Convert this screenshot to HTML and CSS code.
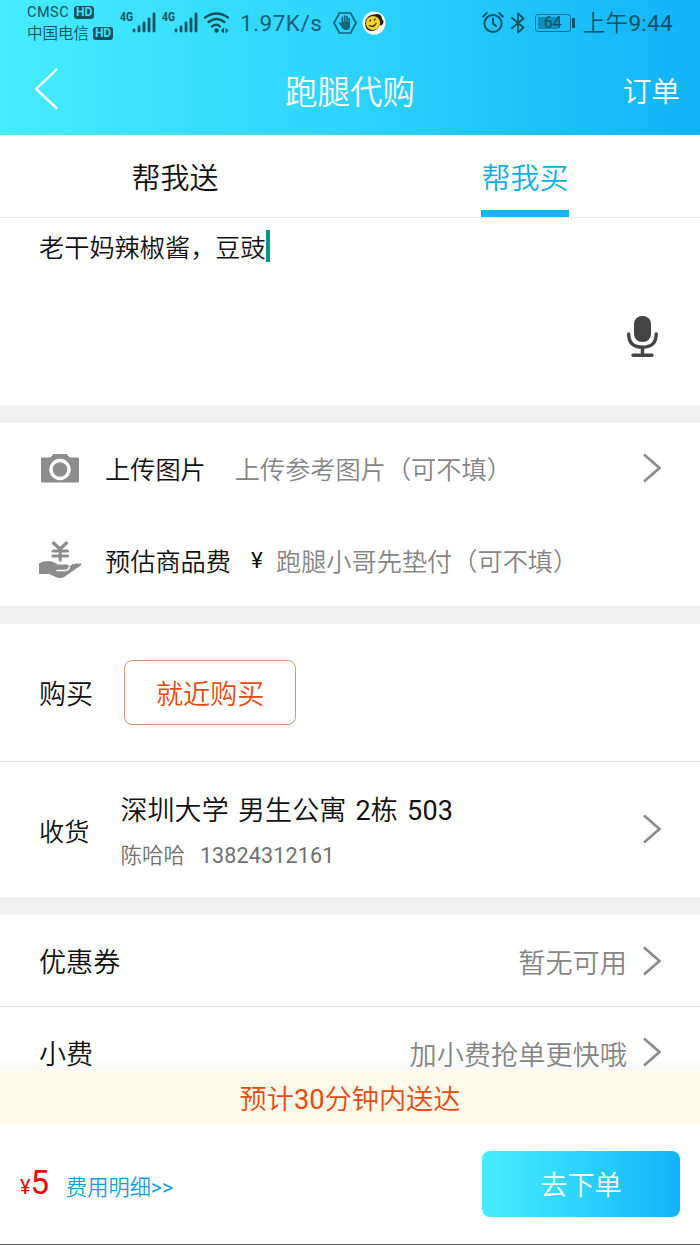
FILE: index.html
```html
<!DOCTYPE html>
<html lang="zh-CN">
<head>
<meta charset="utf-8">
<meta name="viewport" content="width=device-width, initial-scale=1">
<title>跑腿代购</title>
<link rel="stylesheet" href="styles.css">
</head>
<body>
<div class="app">
  <header class="header">
    <div class="status">
      <div class="carriers">
        <div class="carrier"><span class="num">CMSC</span><b class="hd">HD</b></div>
        <div class="carrier carrier-cn"><span>中国电信</span><b class="hd">HD</b></div>
      </div>
      <svg class="signals" width="110" height="26" viewBox="0 0 110 26">
        <g fill="none" stroke="#12525f" stroke-width="2.800" stroke-linecap="round">
          <path d="M14 22v-1M19 22v-4M24 22v-8M29 22V10M34 22V5"/>
          <path d="M56 22v-1M61 22v-4M66 22v-8M71 22V10M76 22V5"/>
        </g>
        <g class="net"><text x="0" y="12" textLength="13" lengthAdjust="spacingAndGlyphs">4G</text><text x="42" y="12" textLength="13" lengthAdjust="spacingAndGlyphs">4G</text></g>
        <g fill="none" stroke="#12525f" stroke-width="2.300" stroke-linecap="round">
          <path d="M85 8.500q11.500-8 23 0M88.500 13q8-6 16 0M92 17.500q4.500-3.500 8 0"/>
        </g>
        <circle cx="96.500" cy="21.500" r="2.200" fill="#12525f"/>
        <path d="M104 18.500v6l-3-3zM105.500 18.500v6l3-3z" fill="#12525f"/>
      </svg>
      <span class="speed num">1.97K/s</span>
      <svg class="palm" width="24" height="24" viewBox="0 0 24 24">
        <path d="M6.500 2h11L23 12l-5.500 10h-11L1 12z" fill="none" stroke="#12637b" stroke-width="1.700" stroke-linejoin="round"/>
        <path d="M9.300 12V6.500M11.700 11V5M14 11V5.700M16.200 12V7.700M9 15l-2.300-3" stroke="#12637b" stroke-width="1.700" stroke-linecap="round"/>
        <path d="M8.400 11H17v4q0 4-3.500 4h-1.500q-2 0-3.600-3z" fill="#12637b"/>
      </svg>
      <svg class="face" width="24" height="24" viewBox="0 0 24 24">
        <circle cx="12" cy="12" r="11.500" fill="#fff"/>
        <path d="M3 12Q4 4 13 3.200q3-.7 5 .6Q20 5 20 8q3 3 0 6-1 1-2 0-3 6-9 6-6-1-6-8z" fill="#202014"/>
        <ellipse cx="11" cy="12" rx="7.200" ry="6.800" transform="rotate(-25 11 12)" fill="#f8d51d"/>
        <path d="M8 10l.5-.8M12.500 8.800l.5-.8M7.500 14.500q4 2.500 6.500-2" fill="none" stroke="#2b2916" stroke-width="1.400" stroke-linecap="round"/>
      </svg>
      <div class="status-right">
        <svg width="22" height="24" viewBox="0 0 22 24" fill="none" stroke="#0b5168" stroke-width="2" stroke-linecap="round">
          <circle cx="11" cy="12.500" r="8.600"/><path d="M11 7.500v5l3 2.500M1.200 5.500L4.800 2M20.800 5.500L17.200 2"/>
        </svg>
        <svg class="bluetooth" width="14" height="24" viewBox="0 0 14 24" fill="none" stroke="#0b5168" stroke-width="1.800" stroke-linejoin="round" stroke-linecap="round">
          <path d="M1 7l11.500 9.500L7 21.500v-19l5.500 5L1 17"/>
        </svg>
        <span class="battery"><span class="level"></span><span class="percent num">64</span></span><i class="battery-tip"></i>
        <span class="clock">上午<span class="num">9:44</span></span>
      </div>
    </div>
    <div class="nav">
      <svg width="26" height="42" viewBox="0 0 26 42" fill="none" stroke="#fff" stroke-width="2.400" stroke-linecap="round" stroke-linejoin="round"><path d="M22.500 1.500L2 21l20.500 19"/></svg>
      <h1 class="title">跑腿代购</h1>
      <span class="orders">订单</span>
    </div>
  </header>

  <nav class="tabs">
    <div class="tab"><span>帮我送</span></div>
    <div class="tab tab-active"><span>帮我买</span></div>
  </nav>

  <section class="note">
    <div class="note-text"><span>老干妈辣椒酱，豆豉</span><i class="caret"></i></div>
    <svg class="mic" width="32" height="43" viewBox="0 0 32 43">
      <rect x="8" y="1" width="17" height="26" rx="8" fill="#444"/>
      <path d="M2.700 19q0 13.200 13.800 13.200T30.200 19M16.500 32v8M7 40.200h19" fill="none" stroke="#444" stroke-width="3.400" stroke-linecap="round"/>
    </svg>
  </section>

  <section class="group">
    <div class="row upload">
      <svg class="icon" width="44" height="40" viewBox="0 0 44 40">
        <path d="M3 9.500h9.500L15.500 6h13l3 3.500H40q1 0 1 1v23q0 1-1 1H4q-1 0-1-1v-24z" fill="#8c8c8c"/>
        <circle cx="22" cy="21.500" r="9" fill="#8c8c8c" stroke="#fff" stroke-width="3.400"/>
      </svg>
      <span class="label">上传图片</span>
      <span class="hint">上传参考图片（可不填）</span>
      <svg class="chevron" width="20" height="30" viewBox="0 0 20 30"><path d="M2 1.500L17.500 15 2 28.500"/></svg>
    </div>
    <div class="row estimate">
      <svg class="icon" width="44" height="40" viewBox="0 0 44 40">
        <path d="M15.500 3l6.500 6 6.500-6M15 11h14.500M15 16h14.500M22.200 10v10" fill="none" stroke="#8c8c8c" stroke-width="3.200" stroke-linecap="round"/>
        <path d="M1 23.500q6-3.500 13-2l6 3h8q3.500.3 3.500 2l2-1.500q1.500-2 2.500-.5l2-1q1.500-.6 2 .5l2-.8q2.500 0 1 2L27 36.500q-4 2.500-8 1L11 34H1z" fill="#8c8c8c"/>
        <path d="M19 30.500h8q4-.3 4.200-3.500" fill="none" stroke="#fff" stroke-width="1.600" stroke-linecap="round"/>
      </svg>
      <span class="label">预估商品费</span>
      <span class="yen">¥</span>
      <span class="hint">跑腿小哥先垫付（可不填）</span>
    </div>
  </section>

  <section class="group">
    <div class="row buy">
      <span class="label label-lg">购买</span>
      <span class="nearby">就近购买</span>
    </div>
    <div class="row receive">
      <span class="label">收货</span>
      <div class="address">
        <div class="place">深圳大学 男生公寓 <span class="num">2</span>栋 <span class="num">503</span></div>
        <div class="contact"><span>陈哈哈</span><span class="phone num">13824312161</span></div>
      </div>
      <svg class="chevron" width="20" height="30" viewBox="0 0 20 30"><path d="M2 1.500L17.500 15 2 28.500"/></svg>
    </div>
  </section>

  <section class="group last">
    <div class="row coupon">
      <span class="label label-lg">优惠券</span>
      <span class="value">暂无可用</span>
      <svg class="chevron" width="20" height="30" viewBox="0 0 20 30"><path d="M2 1.500L17.500 15 2 28.500"/></svg>
    </div>
    <div class="row tip">
      <span class="label label-lg">小费</span>
      <span class="value">加小费抢单更快哦</span>
      <svg class="chevron" width="20" height="30" viewBox="0 0 20 30"><path d="M2 1.500L17.500 15 2 28.500"/></svg>
    </div>
  </section>

  <div class="eta">预计<span class="num">30</span>分钟内送达</div>
  <footer class="footer">
    <div class="price"><span class="currency">¥</span><span class="amount">5</span></div>
    <span class="detail">费用明细<span class="num">&gt;&gt;</span></span>
    <button class="submit">去下单</button>
  </footer>
</div>
</body>
</html>
```
FILE: styles.css
```css
* { box-sizing: border-box; }
body {
  margin: 0;
  background: #fff;
  color: #111;
  font-family: Roboto, "Noto Sans CJK SC", sans-serif;
  font-weight: 350;
}
.app { width: 700px; height: 1245px; display: flex; flex-direction: column; overflow: hidden; white-space: nowrap; border-bottom: 1px solid #5f6062; }
svg { display: block; flex: none; }
.num { font-weight: 400; }

.header { height: 135px; flex: none; background: linear-gradient(90deg, #46edff, #2dd3fc 50%, #10b3f8); }
.status { height: 45px; display: flex; align-items: center; padding-left: 27px; color: #12525f; }
.carriers { width: 93px; display: flex; flex-direction: column; gap: 1px; padding-top: 1px; }
.carrier { height: 20px; display: flex; align-items: center; gap: 5px; font-size: 14.500px; letter-spacing: .5px; line-height: 20px; }
.carrier-cn { font-size: 15.500px; letter-spacing: 0; gap: 4px; }
.hd { width: 20px; height: 13px; border-radius: 3px; background: #12525f; color: #3fe4fe; font-size: 12px; line-height: 13px; letter-spacing: 0; text-align: center; font-weight: 700; }
.net { font: 700 13px Roboto, sans-serif; fill: #12525f; }
.signals { margin-top: -2px; }
.speed { width: 93px; padding-left: 10px; font-size: 22.500px; line-height: 30px; letter-spacing: .5px; color: #126078; }
.palm { margin-left: 10px; }
.face { margin-left: 5px; }
.status-right { margin-left: auto; margin-right: 27px; display: flex; align-items: center; color: #0b5168; }
.bluetooth { margin-left: 7px; }
.battery { position: relative; width: 36px; height: 18px; margin-left: 10px; border: 1.500px solid #0b6c8c; border-radius: 3px; text-align: center; font-size: 16px; line-height: 16px; }
.level { position: absolute; left: 2px; top: 2px; width: 20px; height: 12px; background: #118fb9; }
.percent { position: relative; }
.battery-tip { width: 3px; height: 10px; margin-left: 1px; border-radius: 1px; background: #0b5168; }
.clock { margin-left: 8px; font-size: 22.500px; line-height: 30px; letter-spacing: .3px; }
.nav { height: 90px; display: grid; grid-template-columns: 1fr auto 1fr; align-items: center; padding: 0 20px 2px 34px; color: #fff; }
.title { margin: 7px 14px 0 0; font-size: 32.500px; font-weight: 350; line-height: 44px; }
.orders { justify-self: end; font-size: 28.700px; }

.tabs { height: 83px; flex: none; display: grid; grid-template-columns: 1fr 1fr; border-bottom: 1px solid #e9e9e9; }
.tab { display: flex; justify-content: center; font-size: 29px; line-height: 82px; }
.tab span { height: 82px; padding-top: 3px; }
.tab-active { color: #13ade8; }
.tab-active span { border-bottom: 7px solid #13b5f4; }

.note { height: 205px; flex: none; display: flex; flex-direction: column; justify-content: space-between; padding: 12px 42px 47px 39px; border-bottom: 18px solid #f0f0f0; }
.note-text { height: 32px; display: flex; align-items: center; font-size: 25.200px; line-height: 34px; }
.note-text span { padding-top: 5px; }
.caret { width: 4px; height: 32px; background: #009681; }
.mic { align-self: flex-end; }

.group { flex: none; border-bottom: 18px solid #f0f0f0; }
.last { border-bottom: 0; }
.row { display: flex; align-items: center; padding: 0 38px 0 39px; }
.label { font-size: 25.200px; color: #111; }
.label-lg { font-size: 27.100px; }
.hint { font-size: 25.200px; color: #858585; }
.value { margin-left: auto; font-size: 27.200px; color: #858585; }
.chevron { margin-left: auto; fill: none; stroke: #8b8b8b; stroke-width: 2.600; }
.value + .chevron { margin-left: 15px; }
.upload { height: 91px; padding-bottom: 1px; }
.estimate { height: 92px; }
.icon { margin: 0 23px 0 -1px; }
.upload .hint { margin-left: 29px; }
.yen { width: 25px; margin-left: 20px; font-size: 22.500px; font-weight: 400; }
.buy { height: 138px; border-bottom: 1px solid #e6e6e6; }
.nearby { width: 172px; height: 65px; margin-left: 31px; border: 1px solid #d79672; border-radius: 8px; color: #e64b0d; font-size: 27.100px; line-height: 69px; text-align: center; }
.receive { height: 135px; }
.receive .chevron { margin-bottom: 2px; }
.address { margin-left: 31px; padding-top: 9px; }
.place { font-size: 27px; line-height: 44px; word-spacing: 2.500px; letter-spacing: .1px; }
.contact { display: flex; gap: 15px; font-size: 21.500px; line-height: 46px; color: #707070; }
.phone { letter-spacing: .15px; }
.coupon { height: 92px; border-bottom: 1px solid #e6e6e6; }
.tip { height: 63px; padding-top: 30px; align-items: flex-start; background: linear-gradient(#fff 52px, #f6f6f6); }
.tip .label, .tip .value { margin-top: -4px; }

.eta { height: 54px; flex: none; background: #fffaea; color: #e64b0d; font-size: 27.200px; line-height: 60px; text-align: center; }
.footer { height: 120px; flex: none; display: flex; align-items: center; padding: 0 20px; }
.price { display: flex; align-items: baseline; margin-bottom: 3px; color: #e10a0a; font-weight: 400; }
.currency { font-size: 20px; }
.amount { font-size: 33px; }
.detail { margin: 2px 0 0 17px; font-size: 21.200px; color: #139fd8; }
.submit { width: 198px; height: 66px; margin: 0 0 0 auto; padding: 5px 0 0; border: 0; border-radius: 8px; background: linear-gradient(90deg, #46edff, #2dd3fc 50%, #10b3f8); color: #fff; font: 350 27.200px/61px Roboto, "Noto Sans CJK SC", sans-serif; }
```
